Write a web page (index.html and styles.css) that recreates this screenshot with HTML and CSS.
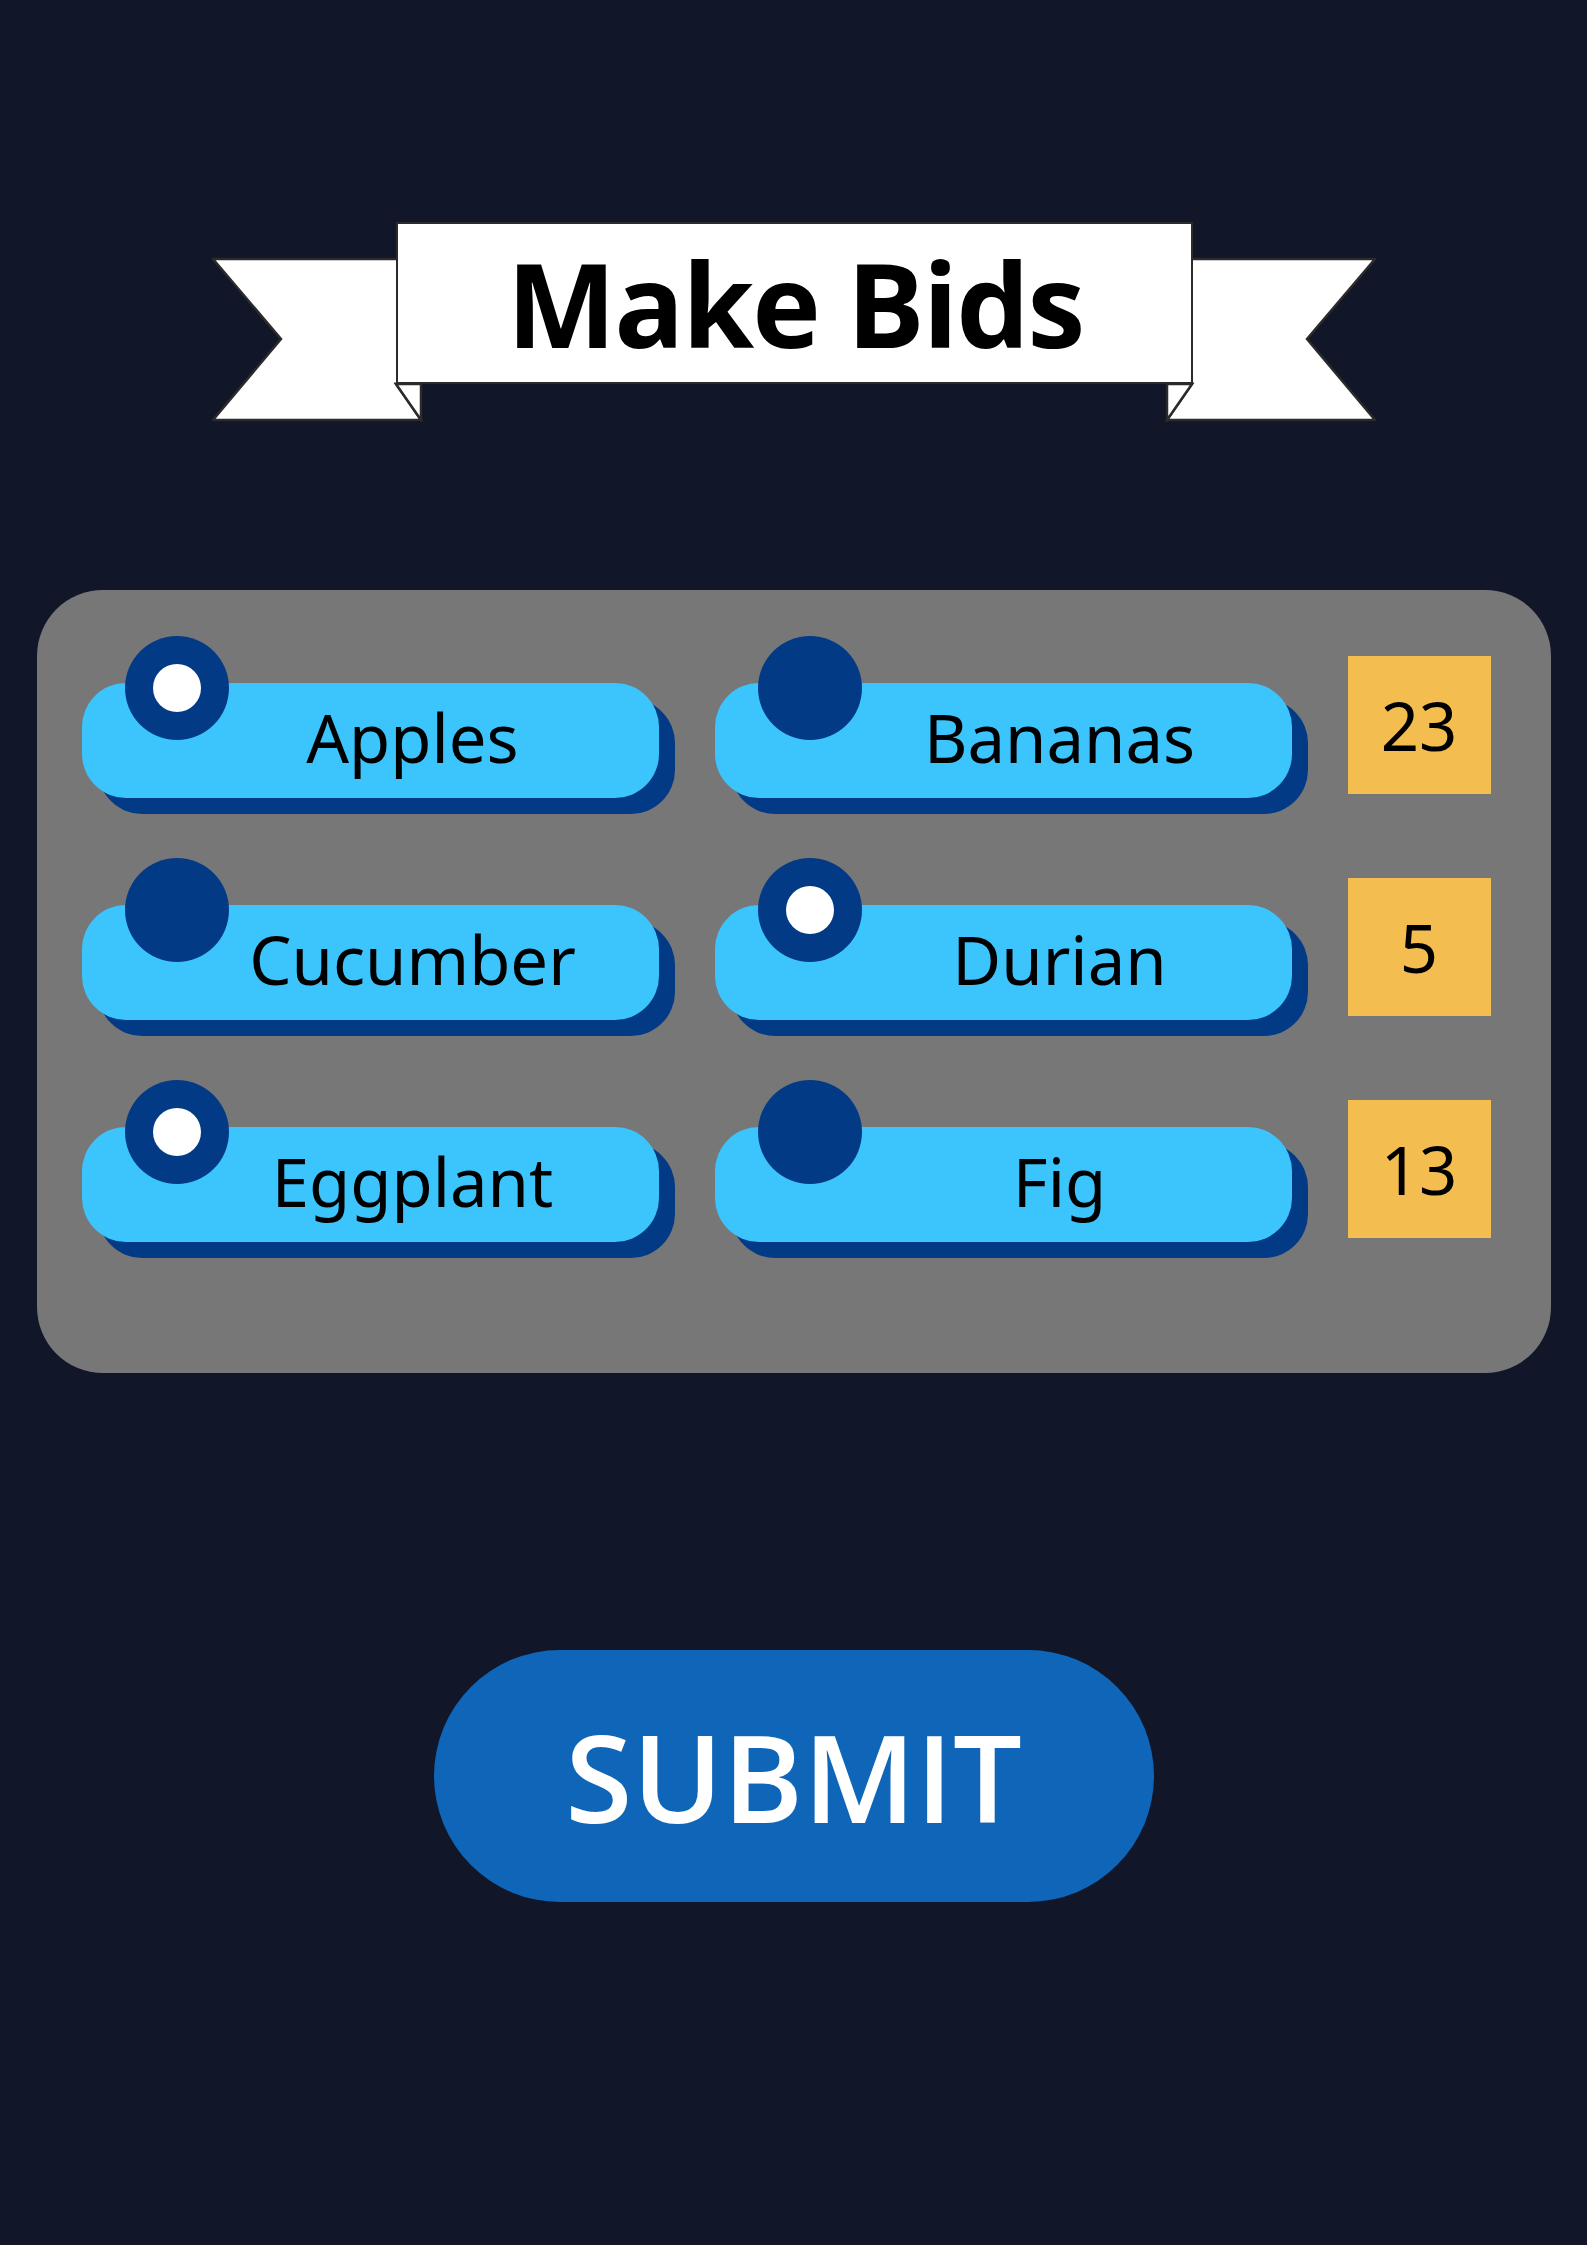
FILE: index.html
```html
<!DOCTYPE html>
<html lang="en">
<head>
<meta charset="utf-8">
<title>Make Bids</title>
<link rel="stylesheet" href="styles.css">
</head>
<body>
<main class="page">
  <header class="banner">
    <svg class="banner-tails" width="1164" height="200" viewBox="0 0 1164 200" aria-hidden="true">
      <polygon points="1,37 200,37 200,162 184,162 209,198 1,198 69,117" fill="#fff" stroke="#2b2b2b" stroke-width="2.5" stroke-linejoin="miter"/>
      <polygon points="184,162 209,162 209,198" fill="#fff" stroke="#2b2b2b" stroke-width="2.5"/>
      <polygon points="1163,37 964,37 964,162 980,162 955,198 1163,198 1095,117" fill="#fff" stroke="#2b2b2b" stroke-width="2.5" stroke-linejoin="miter"/>
      <polygon points="980,162 955,162 955,198" fill="#fff" stroke="#2b2b2b" stroke-width="2.5"/>
    </svg>
    <div class="banner-box"><h1 class="title">Make Bids</h1></div>
  </header>

  <section class="panel">
    <div class="item">
      <span class="radio radio--on"></span>
      <div class="pill pill--left">Apples</div>
    </div>
    <div class="item">
      <span class="radio"></span>
      <div class="pill pill--right">Bananas</div>
    </div>
    <div class="count">23</div>

    <div class="item">
      <span class="radio"></span>
      <div class="pill pill--left">Cucumber</div>
    </div>
    <div class="item">
      <span class="radio radio--on"></span>
      <div class="pill pill--right">Durian</div>
    </div>
    <div class="count">5</div>

    <div class="item">
      <span class="radio radio--on"></span>
      <div class="pill pill--left">Eggplant</div>
    </div>
    <div class="item">
      <span class="radio"></span>
      <div class="pill pill--right">Fig</div>
    </div>
    <div class="count">13</div>
  </section>

  <button class="submit" type="button">SUBMIT</button>
</main>
</body>
</html>
```

FILE: styles.css
```css
html, body {
  margin: 0;
  padding: 0;
}

body {
  background: #111629;
  min-height: 2245px;
  font-family: "Noto Sans", "Open Sans", sans-serif;
}

.page {
  display: flex;
  flex-direction: column;
  align-items: center;
  padding-top: 222px;
}

/* ---------- banner ---------- */
.banner {
  position: relative;
  width: 1164px;
  height: 198px;
  display: flex;
  align-items: flex-start;
}

.banner-tails {
  position: absolute;
  left: 0;
  top: 0;
  z-index: 0;
}

.banner-box {
  position: relative;
  z-index: 1;
  margin-left: 184px;
  width: 797px;
  height: 162px;
  box-sizing: border-box;
  background: #ffffff;
  border: 2.5px solid #2b2b2b;
  display: flex;
  align-items: center;
  justify-content: center;
}

.title {
  margin: 0;
  font-family: "Open Sans", "Noto Sans", sans-serif;
  font-weight: 700;
  font-size: 116px;
  line-height: 1;
  color: #000;
  letter-spacing: -2px;
  padding-left: 2px;
}

/* ---------- panel ---------- */
.panel {
  margin-top: 170px;
  width: 1514px;
  height: 783px;
  box-sizing: border-box;
  background: #777777;
  border-radius: 66px;
  padding: 46px 60px 0 45px;
  display: grid;
  grid-template-columns: 577px 577px 143px;
  grid-auto-rows: 162px;
  column-gap: 56px;
  row-gap: 60px;
  align-content: start;
}

.item {
  position: relative;
  padding-top: 47px;
}

.pill {
  height: 115px;
  box-sizing: border-box;
  background: #3cc5fd;
  border-radius: 44px;
  box-shadow: 16px 16px 0 0 #033a86;
  display: flex;
  align-items: center;
  justify-content: center;
  font-size: 67px;
  color: #000;
  padding-bottom: 8px;
}

.pill--left {
  padding-left: 85px;
}

.pill--right {
  padding-left: 113px;
}

.radio {
  position: absolute;
  top: 0;
  left: 43px;
  width: 104px;
  height: 104px;
  border-radius: 50%;
  background: #033a86;
  z-index: 2;
  display: flex;
  align-items: center;
  justify-content: center;
}

.radio--on::after {
  content: "";
  width: 48px;
  height: 48px;
  border-radius: 50%;
  background: #ffffff;
}

.count {
  margin-top: 20px;
  height: 138px;
  background: #f4bd50;
  display: flex;
  align-items: center;
  justify-content: center;
  font-size: 67px;
  color: #000;
}

/* ---------- submit ---------- */
.submit {
  margin-top: 277px;
  width: 720px;
  height: 252px;
  border: none;
  border-radius: 126px;
  background: #0f66b8;
  color: #ffffff;
  font-family: "Open Sans", "Noto Sans", sans-serif;
  font-weight: 600;
  font-size: 122px;
  line-height: 1;
  padding: 0;
  display: flex;
  align-items: center;
  justify-content: center;
  cursor: pointer;
}
```
